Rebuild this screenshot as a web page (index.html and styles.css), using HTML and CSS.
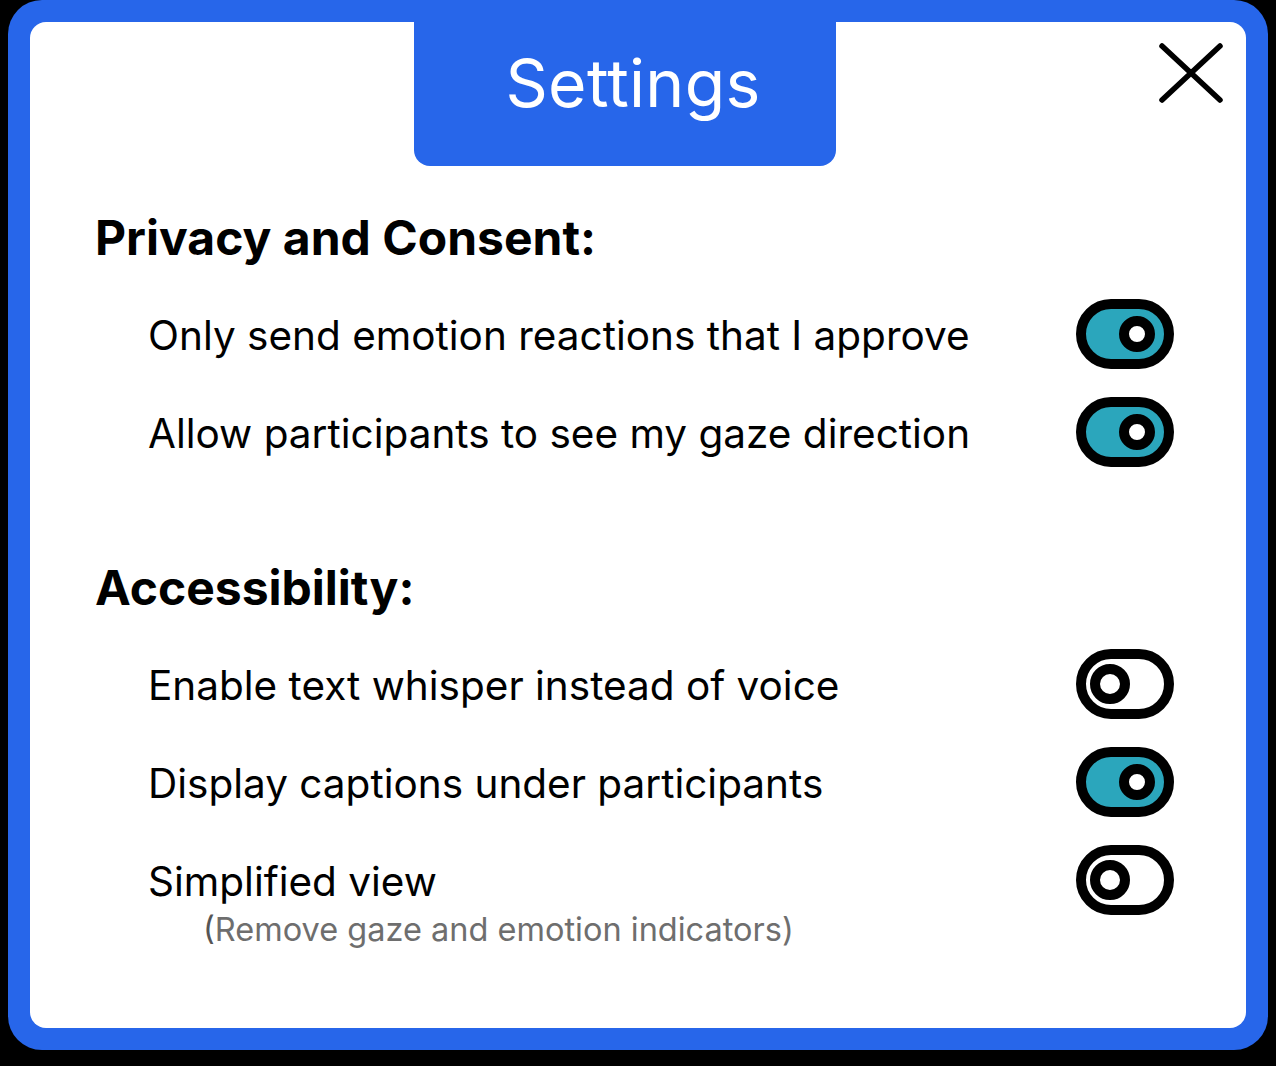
FILE: index.html
```html
<!DOCTYPE html>
<html lang="en">
<head>
<meta charset="utf-8">
<title>Settings</title>
<link rel="stylesheet" href="styles.css">
</head>
<body>
<div class="frame">
  <div class="panel">
    <div class="tab"><h1 class="tab-title">Settings</h1></div>
    <button class="close" aria-label="Close">
      <svg width="66" height="62" viewBox="0 0 66 62">
        <path d="M4 4 L62 58 M62 4 L4 58" stroke="#000" stroke-width="5.5" stroke-linecap="round" fill="none"/>
      </svg>
    </button>

    <section class="section first">
      <h2 class="section-title">Privacy and Consent:</h2>
      <div class="row">
        <div class="label"><span class="text">Only send emotion reactions that I approve</span></div>
        <svg class="toggle" width="98" height="70" viewBox="0 0 98 70">
          <rect x="5" y="5" width="88" height="60" rx="30" fill="#2ba6bc" stroke="#000" stroke-width="10"/>
          <circle cx="61" cy="35" r="13" fill="#fff" stroke="#000" stroke-width="10"/>
        </svg>
      </div>
      <div class="row">
        <div class="label"><span class="text">Allow participants to see my gaze direction</span></div>
        <svg class="toggle" width="98" height="70" viewBox="0 0 98 70">
          <rect x="5" y="5" width="88" height="60" rx="30" fill="#2ba6bc" stroke="#000" stroke-width="10"/>
          <circle cx="61" cy="35" r="13" fill="#fff" stroke="#000" stroke-width="10"/>
        </svg>
      </div>
    </section>

    <section class="section second">
      <h2 class="section-title">Accessibility:</h2>
      <div class="row">
        <div class="label"><span class="text">Enable text whisper instead of voice</span></div>
        <svg class="toggle" width="98" height="70" viewBox="0 0 98 70">
          <rect x="5" y="5" width="88" height="60" rx="30" fill="#fff" stroke="#000" stroke-width="10"/>
          <circle cx="34" cy="35" r="15" fill="#fff" stroke="#000" stroke-width="10"/>
        </svg>
      </div>
      <div class="row">
        <div class="label"><span class="text">Display captions under participants</span></div>
        <svg class="toggle" width="98" height="70" viewBox="0 0 98 70">
          <rect x="5" y="5" width="88" height="60" rx="30" fill="#2ba6bc" stroke="#000" stroke-width="10"/>
          <circle cx="61" cy="35" r="13" fill="#fff" stroke="#000" stroke-width="10"/>
        </svg>
      </div>
      <div class="row">
        <div class="label">
          <span class="text">Simplified view</span>
          <span class="hint"><span class="paren">(</span>Remove gaze and emotion indicators)</span>
        </div>
        <svg class="toggle" width="98" height="70" viewBox="0 0 98 70">
          <rect x="5" y="5" width="88" height="60" rx="30" fill="#fff" stroke="#000" stroke-width="10"/>
          <circle cx="34" cy="35" r="15" fill="#fff" stroke="#000" stroke-width="10"/>
        </svg>
      </div>
    </section>
  </div>
</div>
</body>
</html>
```

FILE: styles.css
```css
* { box-sizing: border-box; }

html, body {
  margin: 0;
  padding: 0;
  background: #000;
}

body {
  width: 1276px;
  height: 1066px;
  overflow: hidden;
  font-family: Inter, "Noto Sans", sans-serif;
  color: #000;
}

.frame {
  margin-left: 8px;
  width: 1260px;
  height: 1050px;
  background: #2766ea;
  border-radius: 34px;
  padding: 22px;
}

.panel {
  position: relative;
  height: 1006px;
  background: #fff;
  border-radius: 16px;
  padding: 0 72px 0 65px;
}

.tab {
  margin-left: 319px;
  width: 422px;
  height: 144px;
  background: #2766ea;
  border-radius: 0 0 16px 16px;
  display: flex;
  justify-content: center;
  padding-top: 23px;
  padding-left: 16px;
}

.tab-title {
  margin: 0;
  color: #fff;
  font-weight: 400;
  font-size: 66px;
  line-height: 76px;
  letter-spacing: 0.3px;
}

.close {
  position: absolute;
  top: 20px;
  right: 22px;
  padding: 0;
  border: 0;
  background: none;
  line-height: 0;
}

.section-title {
  margin: 0 0 18px;
  font-size: 48px;
  line-height: 58px;
  font-weight: 700;
}

.first { margin-top: 43px; }
.second { margin-top: 78px; }

.row {
  display: flex;
  justify-content: space-between;
  align-items: flex-start;
  padding: 25px 0;
  margin-left: 53px;
}

.label {
  display: flex;
  flex-direction: column;
  margin: 2px 0 -2px;
}

.text {
  font-size: 40.5px;
  line-height: 48px;
}

.hint {
  margin: 4px 0 0 55px;
  font-size: 32.5px;
  line-height: 40px;
  color: #6e6e6e;
}

.paren {
  color: #555;
}

.toggle {
  flex: none;
  margin: -11px 0;
}
```
